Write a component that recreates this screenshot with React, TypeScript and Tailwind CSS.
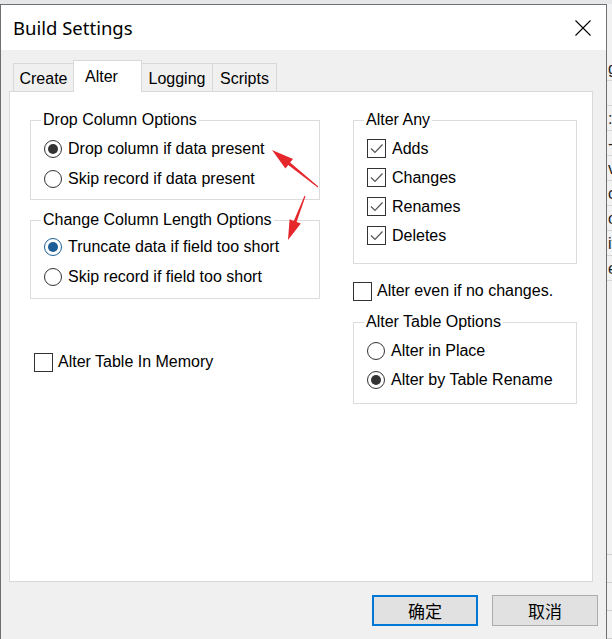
import type { ReactNode } from "react";

function Radio({ on, hot }: { on?: boolean; hot?: boolean }) {
    return (
        <span
            className={`w-[18px] h-[18px] rounded-full border bg-white flex items-center justify-center shrink-0 ${
                hot ? "border-[#1c5f98]" : "border-[#333333]"
            }`}
        >
            {on && <span className={`w-[10px] h-[10px] rounded-full ${hot ? "bg-[#1c5f98]" : "bg-[#333333]"}`} />}
        </span>
    );
}

function Check({ on }: { on?: boolean }) {
    return (
        <span className="w-[19px] h-[19px] border border-[#333333] bg-white flex items-center justify-center shrink-0">
            {on && (
                <svg width="15" height="15" viewBox="0 0 15 15">
                    <path d="M2 7.5 L6 11.5 L13.5 3.5" fill="none" stroke="#555555" strokeWidth="1.2" />
                </svg>
            )}
        </span>
    );
}

function Group({ label, className, children }: { label: string; className?: string; children: ReactNode }) {
    return (
        <fieldset className={`border border-[#dcdcdc] pl-[10px] ${className ?? ""}`}>
            <legend className="px-[2px] leading-[20px]">{label}</legend>
            {children}
        </fieldset>
    );
}

const stripRows = ["g", "", ":", "-", "ve", "cl", "or", "if", "e"];

export default function App() {
    return (
        <div className="relative w-[612px] h-[639px] overflow-hidden bg-[#e6e7e9] font-['Liberation_Sans',Arial,sans-serif] text-[16px] text-black flex flex-col">
            <div className="h-[4px] shrink-0" />
            <div className="flex flex-1 min-h-0">
                {/* dialog */}
                <div className="w-[607px] flex flex-col border-l border-r border-t border-[#707070] bg-[#f0f0f0]">
                    {/* title bar */}
                    <div className="h-[45px] bg-white flex items-center justify-between pl-[12px] pr-[15px] shrink-0">
                        <span className="font-['Noto_Sans',sans-serif] text-[18.5px]">Build Settings</span>
                        <svg width="16" height="16" viewBox="0 0 16 16">
                            <path d="M0.5 0.5 L15.5 15.5 M15.5 0.5 L0.5 15.5" stroke="#000" strokeWidth="1.1" />
                        </svg>
                    </div>

                    <div className="flex-1 flex flex-col px-[8px] pt-[10px]">
                        {/* tabs */}
                        <div className="flex items-end pl-[4px] h-[31px]">
                            <div className="w-[60px] h-[28px] border-l border-t border-[#d9d9d9] bg-[#f0f0f0] flex items-center justify-center pt-[2px]">
                                Create
                            </div>
                            <div className="relative z-10 w-[69px] h-[32px] -mb-px border-l border-t border-r border-[#d9d9d9] bg-white flex items-center justify-center pr-[12px]">
                                Alter
                            </div>
                            <div className="w-[71px] h-[28px] border-t border-r border-[#d9d9d9] bg-[#f0f0f0] flex items-center justify-center pt-[2px]">
                                Logging
                            </div>
                            <div className="w-[64px] h-[28px] border-t border-r border-[#d9d9d9] bg-[#f0f0f0] flex items-center justify-center pt-[2px]">
                                Scripts
                            </div>
                        </div>

                        {/* tab page */}
                        <div className="w-[584px] h-[491px] bg-white border border-[#d9d9d9] flex gap-[33px] pl-[20px] pt-[18px]">
                            <div className="w-[290px] flex flex-col">
                                <Group label="Drop Column Options">
                                    <div className="pt-[4px] pb-[5px] pl-[3px]">
                                        <div className="h-[30px] flex items-center gap-[6px]">
                                            <Radio on />
                                            <span>Drop column if data present</span>
                                        </div>
                                        <div className="h-[30px] flex items-center gap-[6px]">
                                            <Radio />
                                            <span>Skip record if data present</span>
                                        </div>
                                    </div>
                                </Group>
                                <Group label="Change Column Length Options" className="mt-[10px]">
                                    <div className="pt-[2px] pb-[6px] pl-[3px]">
                                        <div className="h-[30px] flex items-center gap-[6px]">
                                            <Radio on hot />
                                            <span>Truncate data if field too short</span>
                                        </div>
                                        <div className="h-[30px] flex items-center gap-[6px]">
                                            <Radio />
                                            <span>Skip record if field too short</span>
                                        </div>
                                    </div>
                                </Group>
                                <div className="mt-[53px] h-[20px] pl-[4px] flex items-center gap-[5px]">
                                    <Check />
                                    <span>Alter Table In Memory</span>
                                </div>
                            </div>

                            <div className="w-[224px] flex flex-col">
                                <Group label="Alter Any">
                                    <div className="pt-[4px] pb-[13px] pl-[3px]">
                                        {["Adds", "Changes", "Renames", "Deletes"].map((t) => (
                                            <div key={t} className="h-[29px] flex items-center gap-[6px]">
                                                <Check on />
                                                <span>{t}</span>
                                            </div>
                                        ))}
                                    </div>
                                </Group>
                                <div className="mt-[17px] h-[20px] flex items-center gap-[5px]">
                                    <Check />
                                    <span>Alter even if no changes.</span>
                                </div>
                                <Group label="Alter Table Options" className="mt-[11px]">
                                    <div className="pt-[4px] pb-[9px] pl-[3px]">
                                        <div className="h-[29px] flex items-center gap-[6px]">
                                            <Radio />
                                            <span>Alter in Place</span>
                                        </div>
                                        <div className="h-[29px] flex items-center gap-[6px]">
                                            <Radio on />
                                            <span>Alter by Table Rename</span>
                                        </div>
                                    </div>
                                </Group>
                            </div>
                        </div>

                        {/* buttons */}
                        <div className="flex justify-end gap-[14px] mt-[13px] font-['Noto_Sans_CJK_SC',sans-serif] text-[17px]">
                            <button className="w-[106px] h-[31px] bg-[#e1e1e1] border-2 border-[#0078d7] flex items-center justify-center">
                                确定
                            </button>
                            <button className="w-[106px] h-[31px] bg-[#e1e1e1] border border-[#adadad] flex items-center justify-center">
                                取消
                            </button>
                        </div>
                    </div>
                </div>

                {/* window behind */}
                <div className="flex-1 overflow-hidden bg-[#f2f2f2] flex flex-col text-[#222] whitespace-nowrap">
                    <div className="h-[52px]" />
                    {stripRows.map((t, i) => (
                        <div key={i} className="h-[25px] pl-[1px] leading-[25px] border-b border-[#d6d6d6]">
                            {t}
                        </div>
                    ))}
                    <div className="flex-1" />
                    {[0, 1, 2, 3].map((i) => (
                        <div key={i} className="h-[28px] border-b border-[#cfcfcf]" />
                    ))}
                </div>
            </div>

            {/* red annotation arrows */}
            <svg className="absolute inset-0 pointer-events-none" width="612" height="639" viewBox="0 0 612 639">
                <polygon
                    fill="#e5262b"
                    points="272,150 293,159.1 290.1,162.6 318.3,186.6 317.7,187.4 288.3,165 285.4,168.5"
                />
                <polygon
                    fill="#e5262b"
                    points="288,240 300.8,223.6 296.6,221.9 305.5,196.2 304.5,195.8 293.8,220.9 289.6,219.2"
                />
            </svg>
        </div>
    );
}
